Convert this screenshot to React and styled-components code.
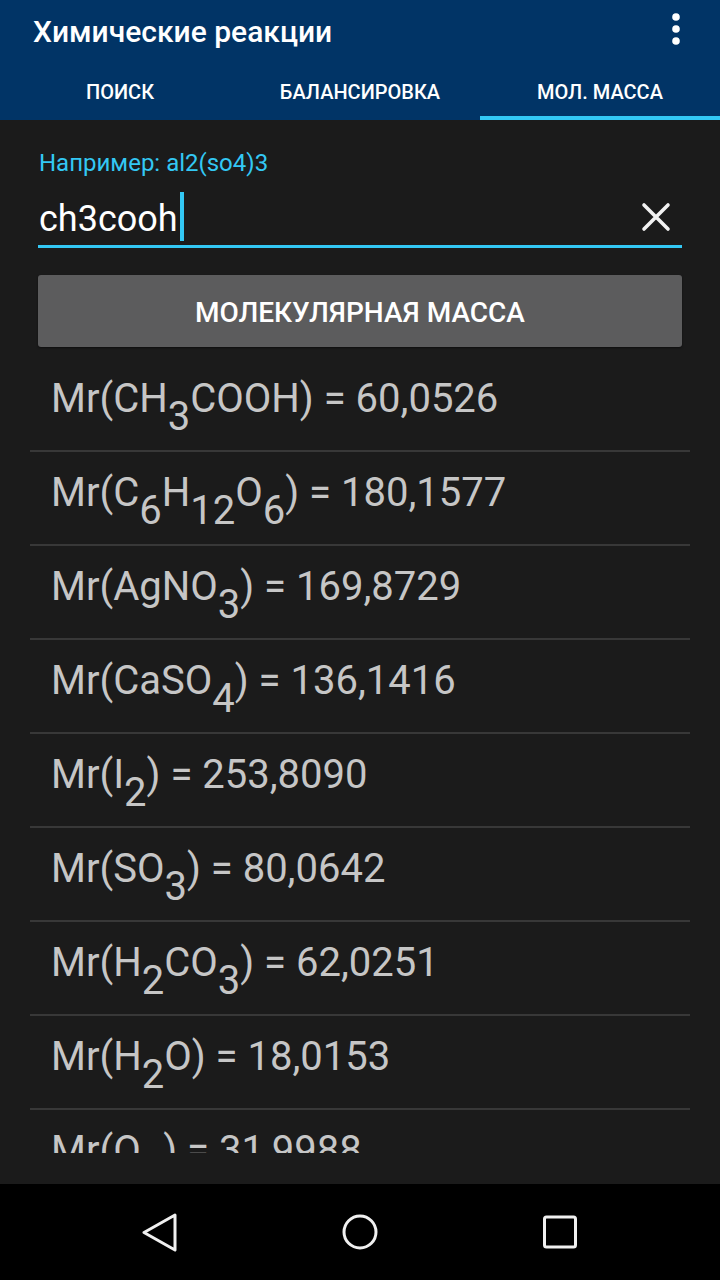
import React from 'react';
import styled, { createGlobalStyle } from 'styled-components';

const GlobalStyle = createGlobalStyle`
  html, body {
    margin: 0;
    padding: 0;
    background: #1b1b1b;
  }
  body {
    font-family: Roboto, 'Noto Sans', sans-serif;
  }
`;

const ACCENT = '#33c8f4';

const results = [
  { parts: ['Mr(CH', ['3'], 'COOH) = 60,0526'] },
  { parts: ['Mr(C', ['6'], 'H', ['12'], 'O', ['6'], ') = 180,1577'] },
  { parts: ['Mr(AgNO', ['3'], ') = 169,8729'] },
  { parts: ['Mr(CaSO', ['4'], ') = 136,1416'] },
  { parts: ['Mr(I', ['2'], ') = 253,8090'] },
  { parts: ['Mr(SO', ['3'], ') = 80,0642'] },
  { parts: ['Mr(H', ['2'], 'CO', ['3'], ') = 62,0251'] },
  { parts: ['Mr(H', ['2'], 'O) = 18,0153'] },
  { parts: ['Mr(O', ['2'], ') = 31,9988'] },
];

const tabs = ['Поиск', 'Балансировка', 'Мол. масса'];

const App = () => {
  return (
    <Screen>
      <GlobalStyle />
      <AppBar>
        <Toolbar>
          <Title>Химические реакции</Title>
          <MenuButton>
            <svg width='10' height='34' viewBox='0 0 10 34'>
              <circle cx='5' cy='5' r='3.8' fill='#fff' />
              <circle cx='5' cy='17' r='3.8' fill='#fff' />
              <circle cx='5' cy='29' r='3.8' fill='#fff' />
            </svg>
          </MenuButton>
        </Toolbar>
        <Tabs>
          {tabs.map((t, i) => (
            <Tab key={t} active={i === 2}>
              {t}
            </Tab>
          ))}
        </Tabs>
      </AppBar>

      <Main>
        <Hint>Например: al2(so4)3</Hint>
        <InputRow>
          <InputText>ch3cooh</InputText>
          <Caret />
          <ClearButton>
            <svg width='30' height='30' viewBox='0 0 30 30'>
              <path
                d='M3 3 L27 27 M27 3 L3 27'
                stroke='#f2f2f2'
                strokeWidth='3.6'
                strokeLinecap='round'
              />
            </svg>
          </ClearButton>
        </InputRow>
        <MassButton>Молекулярная масса</MassButton>
        <ResultList>
          {results.map((r, i) => (
            <ResultRow key={i}>
              <ResultText>
                {r.parts.map((p, j) =>
                  Array.isArray(p) ? <Sub key={j}>{p[0]}</Sub> : <span key={j}>{p}</span>
                )}
              </ResultText>
            </ResultRow>
          ))}
        </ResultList>
      </Main>

      <NavBar>
        <NavItem>
          <svg width='40' height='40' viewBox='0 0 40 40'>
            <path
              d='M35 3 L4 20.5 L35 38 Z'
              fill='none'
              stroke='#f0f0f0'
              strokeWidth='3'
              strokeLinejoin='round'
            />
          </svg>
        </NavItem>
        <NavItem>
          <svg width='40' height='40' viewBox='0 0 40 40'>
            <circle cx='20' cy='20' r='16' fill='none' stroke='#f0f0f0' strokeWidth='3' />
          </svg>
        </NavItem>
        <NavItem>
          <svg width='40' height='40' viewBox='0 0 40 40'>
            <rect
              x='4.5'
              y='5'
              width='31'
              height='30'
              rx='2'
              fill='none'
              stroke='#f0f0f0'
              strokeWidth='3'
            />
          </svg>
        </NavItem>
      </NavBar>
    </Screen>
  );
};

const Screen = styled.div`
  height: 1280px;
  width: 720px;
  display: flex;
  flex-direction: column;
  background: #1b1b1b;
`;

const AppBar = styled.header`
  background: #013466;
  display: flex;
  flex-direction: column;
`;

const Toolbar = styled.div`
  height: 64px;
  display: flex;
  align-items: center;
  padding: 0 0 0 33px;
`;

const Title = styled.h1`
  flex: 1;
  margin: 0;
  color: #fff;
  font-size: 30px;
  font-weight: 500;
  line-height: 64px;
`;

const MenuButton = styled.div`
  width: 48px;
  height: 64px;
  display: flex;
  align-items: center;
  justify-content: center;
  margin-right: 20px;
  margin-top: -6px;
`;

const Tabs = styled.nav`
  height: 56px;
  display: grid;
  grid-template-columns: repeat(3, 1fr);
`;

const Tab = styled.div`
  display: flex;
  align-items: center;
  justify-content: center;
  box-sizing: border-box;
  padding-top: 4px;
  border-bottom: 4px solid ${p => (p.active ? ACCENT : 'transparent')};
  color: #fff;
  font-size: 20px;
  font-weight: 500;
  text-transform: uppercase;
`;

const Main = styled.main`
  flex: 1;
  min-height: 0;
  display: flex;
  flex-direction: column;
  padding: 29px 38px 31px;
`;

const Hint = styled.div`
  color: ${ACCENT};
  font-size: 24px;
  line-height: 28px;
  padding-left: 1px;
`;

const InputRow = styled.div`
  margin-top: 16px;
  height: 52px;
  display: flex;
  align-items: center;
  border-bottom: 3px solid ${ACCENT};
`;

const InputText = styled.span`
  color: #fff;
  font-size: 36px;
  line-height: 52px;
  padding-left: 1px;
`;

const Caret = styled.span`
  align-self: flex-start;
  margin: -1px 0 0 2px;
  width: 4px;
  height: 49px;
  background: ${ACCENT};
`;

const ClearButton = styled.div`
  margin-left: auto;
  margin-right: 11px;
  display: flex;
  align-items: center;
  margin-top: -5px;
`;

const MassButton = styled.div`
  margin-top: 27px;
  height: 72px;
  display: flex;
  align-items: center;
  justify-content: center;
  padding-top: 2px;
  box-sizing: border-box;
  background: #5c5c5d;
  border-radius: 3px;
  box-shadow: 0 1px 2px rgba(0, 0, 0, 0.5);
  color: #fff;
  font-size: 28px;
  font-weight: 500;
  text-transform: uppercase;
`;

const ResultList = styled.div`
  flex: 1;
  min-height: 0;
  overflow: hidden;
  margin: 11px -8px 0;
`;

const ResultRow = styled.div`
  box-sizing: border-box;
  height: 94px;
  padding: 21px 0 0 21px;
  border-bottom: 2px solid #383838;
`;

const ResultText = styled.div`
  color: #c6c6c6;
  font-size: 40px;
  line-height: 40px;
  white-space: nowrap;
`;

const Sub = styled.span`
  vertical-align: -18px;
`;

const NavBar = styled.footer`
  height: 96px;
  background: #000;
  display: flex;
  align-items: center;
  justify-content: center;
  gap: 120px;
`;

const NavItem = styled.div`
  width: 80px;
  display: flex;
  justify-content: center;
  align-items: center;
`;

export default App;
